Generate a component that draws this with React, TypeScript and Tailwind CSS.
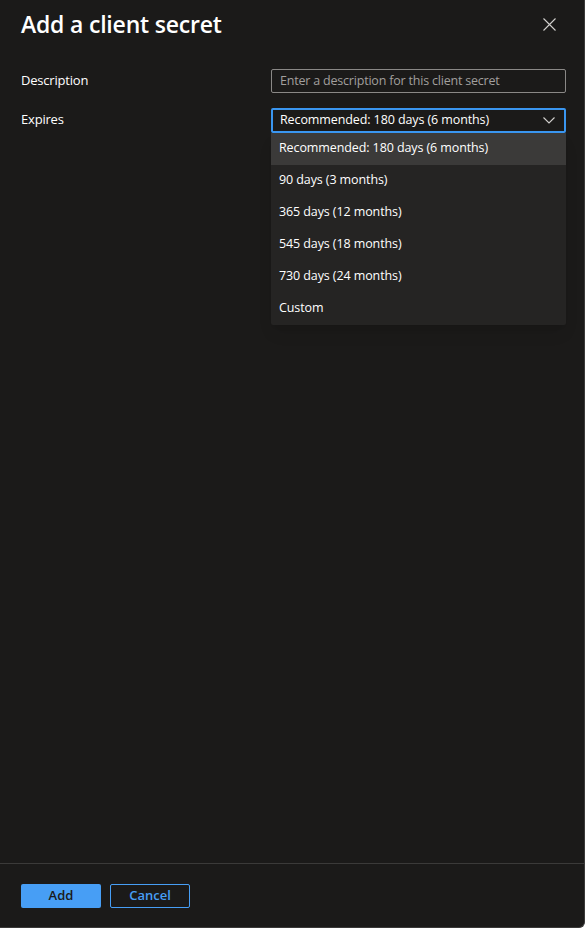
import React from "react";

const options = [
  "Recommended: 180 days (6 months)",
  "90 days (3 months)",
  "365 days (12 months)",
  "545 days (18 months)",
  "730 days (24 months)",
  "Custom",
];

export default function App() {
  return (
    <div
      className="flex h-[928px] w-[585px] flex-col overflow-hidden rounded-br-[6px] border-r border-b border-[#3b3a39] bg-[#1b1a19] text-white"
      style={{ fontFamily: '"Open Sans", "Noto Sans", sans-serif' }}
    >
      <div className="flex items-center justify-between pl-[21px] pr-[28px] pt-[7px]">
        <h1 className="text-[23px] font-semibold tracking-[-0.2px]">Add a client secret</h1>
        <svg width="13" height="13" viewBox="0 0 13 13" className="text-[#d2d0ce]">
          <path d="M0.5 0.5L12.5 12.5M12.5 0.5L0.5 12.5" stroke="currentColor" strokeWidth="1.1" />
        </svg>
      </div>

      <div className="flex flex-col gap-[15px] pl-[21px] pr-[18px] pt-[27px]">
        <div className="flex items-center justify-between">
          <label className="text-[13px] tracking-[-0.2px]">Description</label>
          <input
            className="h-[24px] w-[295px] rounded-[2px] border border-[#8a8886] bg-transparent px-[8px] text-[12.5px] tracking-[-0.2px] text-white outline-none placeholder:text-[#a19f9d]"
            placeholder="Enter a description for this client secret"
          />
        </div>
        <div className="flex items-start justify-between">
          <label className="pt-[2px] text-[13px] tracking-[-0.2px]">Expires</label>
          <div className="relative w-[295px]">
            <div className="flex h-[25px] items-center justify-between rounded-[2px] border-2 border-[#3a96f0] pl-[7px] pr-[9px]">
              <span className="text-[12.5px] tracking-[-0.1px]">Recommended: 180 days (6 months)</span>
              <svg width="12" height="7" viewBox="0 0 12 7" className="text-[#d2d0ce]">
                <path d="M0.5 0.5L6 6L11.5 0.5" fill="none" stroke="currentColor" strokeWidth="1.1" />
              </svg>
            </div>
            <ul className="flex flex-col rounded-b-[2px] bg-[#252423] shadow-lg">
              {options.map((o, i) => (
                <li
                  key={o}
                  className={
                    i === 0
                      ? "flex h-[32px] items-center bg-[#3b3a39] px-[8px] text-[12.5px] tracking-[-0.1px]"
                      : "flex h-[32px] items-center px-[8px] text-[12.5px] tracking-[-0.1px]"
                  }
                >
                  {o}
                </li>
              ))}
            </ul>
          </div>
        </div>
      </div>

      <div className="mt-auto border-t border-[#3b3a39] pb-[19px] pl-[21px] pt-[20px]">
        <div className="flex gap-[9px]">
          <button className="h-[24px] w-[80px] rounded-[2px] bg-[#479ef5] text-[13px] font-semibold text-[#1b1a19]">
            Add
          </button>
          <button className="h-[24px] w-[80px] rounded-[2px] border border-[#479ef5] text-[13px] font-semibold text-[#479ef5]">
            Cancel
          </button>
        </div>
      </div>
    </div>
  );
}
